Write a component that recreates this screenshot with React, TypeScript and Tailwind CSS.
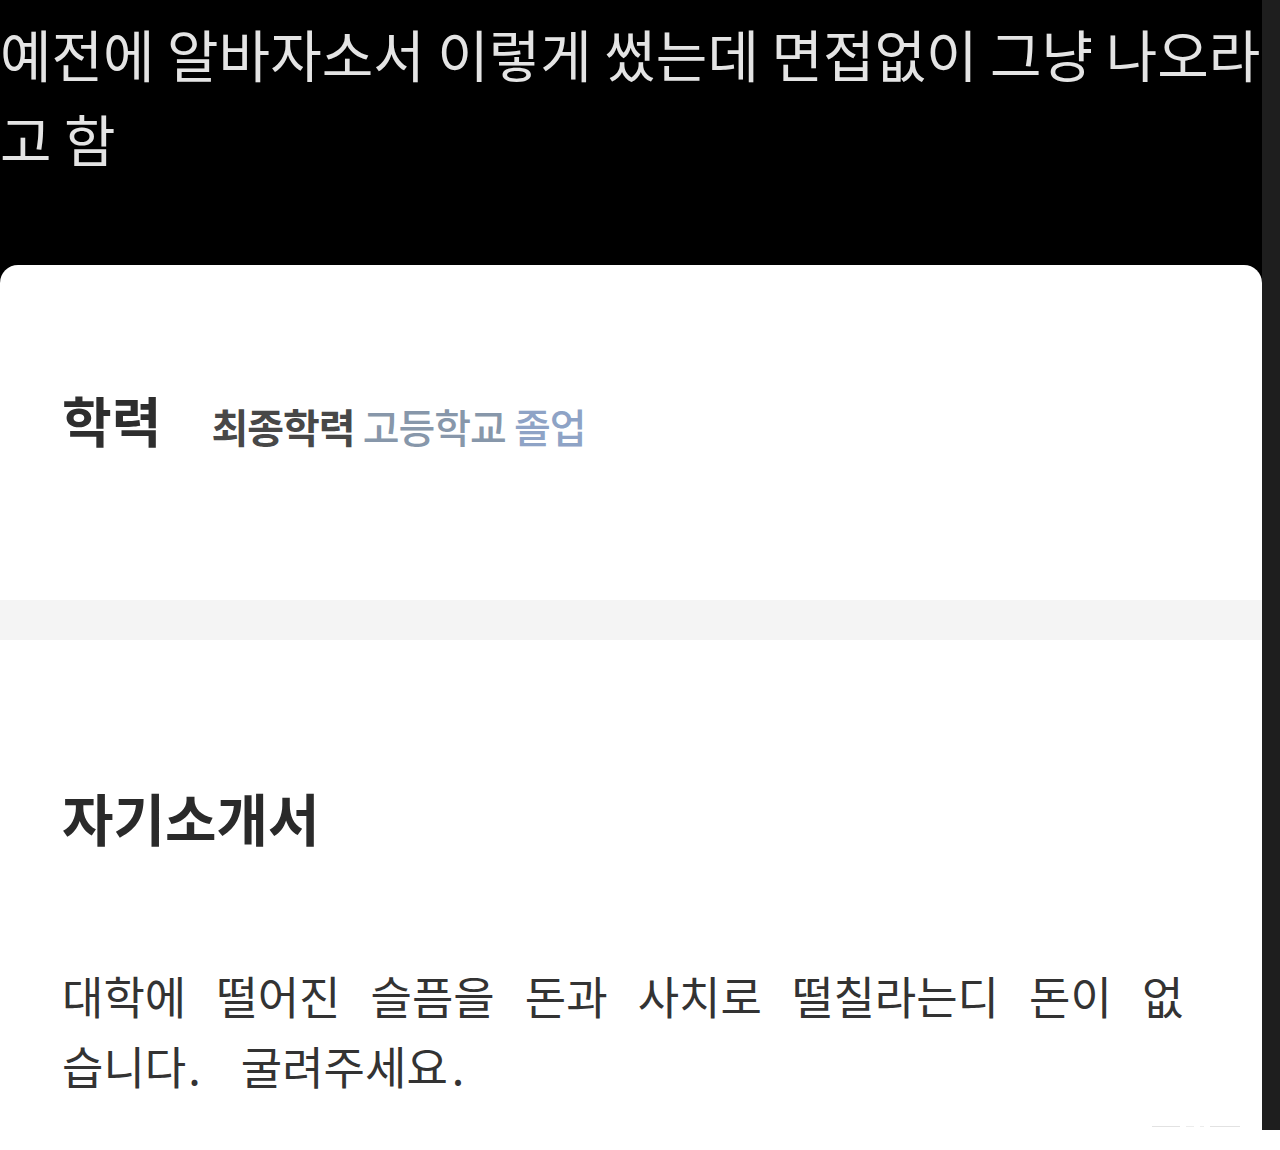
import React from 'react';

const kr = "font-['Noto_Sans_CJK_KR','Noto_Sans',sans-serif]";

export default function App() {
  return (
    <div className={`w-[1280px] h-[1150px] bg-white flex flex-col overflow-hidden ${kr}`}>
      <div className="flex h-[1130px]">
        <div className="w-[1262px] bg-black flex flex-col">
          {/* Caption */}
          <div className="h-[265px] pt-[10px] text-[56px] leading-[85px] text-[#e4e4e4] whitespace-nowrap">
            <p>예전에 알바자소서 이렇게 썼는데 면접없이 그냥 나오라</p>
            <p>고 함</p>
          </div>

          {/* Resume card */}
          <div className="flex-1 bg-white rounded-t-[18px] flex flex-col">
            <div className="h-[335px] pt-[128px] px-[62px] flex items-baseline">
              <h2 className="text-[54px] leading-none font-bold text-[#2e2e2e]">학력</h2>
              <p className="ml-[50px] text-[40px] leading-none font-semibold text-[#484848] tracking-[-1px]">
                최종학력{' '}
                <span className="font-medium text-[#8797aa]">고등학교</span>{' '}
                <span className="font-medium text-[#8ea3c6]">졸업</span>
              </p>
            </div>

            <div className="h-[40px] bg-[#f4f4f4]" />

            <div className="flex-1 pt-[149px] px-[62px] flex flex-col">
              <h2 className="text-[56px] leading-none font-bold text-[#2a2a2a]">자기소개서</h2>
              <p className="mt-[116px] text-[45px] leading-[70px] text-[#333] whitespace-nowrap [word-spacing:20px]">
                대학에 떨어진 슬픔을 돈과 사치로 떨칠라는디 돈이 없
                <br />
                습니다<span className="ml-[2px] mr-[10px]">.</span> 굴려주세요<span className="ml-[4px]">.</span>
              </p>
              <div className="mt-auto mb-[3px] self-end mr-[-40px] flex items-center gap-[6px]">
                <span className="w-[28px] h-[1px] bg-[#e2e2e2]" />
                <span className="w-[8px] h-[1px] bg-[#ececec]" />
                <span className="w-[4px] h-[1px] bg-[#ececec]" />
                <span className="w-[30px] h-[1px] bg-[#e2e2e2]" />
              </div>
            </div>
          </div>
        </div>
        <div className="w-[18px] bg-[#1e1e1e]" />
      </div>
      <div className="flex-1 bg-white" />
    </div>
  );
}
